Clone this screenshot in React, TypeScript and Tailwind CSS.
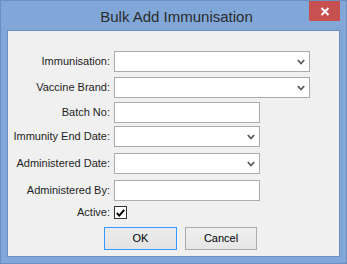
import React from "react";

const Chevron = () => (
  <svg width="8" height="6" viewBox="0 0 8 6" className="absolute right-[4px] top-[7px]">
    <path d="M0.8 1 L4 4.5 L7.2 1" stroke="#5a5a5a" strokeWidth="1.8" fill="none" />
  </svg>
);

function Row({
  label,
  mt,
  width,
  select,
}: {
  label: string;
  mt: string;
  width: string;
  select?: boolean;
}) {
  return (
    <div className={`flex items-center ${mt}`}>
      <div className="w-[103px] text-right pr-[1px] text-[11px] text-[#1e1e1e] leading-none">{label}</div>
      <div className={`relative ml-[3px] h-[21px] ${width} border border-[#acacac] bg-white`}>
        {select && <Chevron />}
      </div>
    </div>
  );
}

export default function App() {
  return (
    <div
      className="w-[347px] h-[264px] bg-[#80a7d8] border border-[#6d8fbf] flex flex-col"
      style={{ fontFamily: '"Liberation Sans", Arial, sans-serif' }}
    >
      <div className="relative h-[29px] flex items-center justify-center">
        <span className="text-[15px] text-[#2b2b2b] leading-none mt-[1px] ml-[6px]">Bulk Add Immunisation</span>
        <div className="absolute right-[6px] top-0 w-[31px] h-[20px] bg-[#c75050] flex items-center justify-center">
          <svg width="10" height="9" viewBox="0 0 10 9">
            <path d="M1.5 1 L8.5 8 M8.5 1 L1.5 8" stroke="white" strokeWidth="2" />
          </svg>
        </div>
      </div>
      <div className="mx-[6px] h-[227px] border border-[#6d8fbf] bg-[#f0f0f0] flex flex-col">
        <Row label="Immunisation:" mt="mt-[20px]" width="w-[196px]" select />
        <Row label="Vaccine Brand:" mt="mt-[5px]" width="w-[196px]" select />
        <Row label="Batch No:" mt="mt-[4px]" width="w-[146px]" />
        <Row label="Immunity End Date:" mt="mt-[3px]" width="w-[146px]" select />
        <Row label="Administered Date:" mt="mt-[6px]" width="w-[146px]" select />
        <Row label="Administered By:" mt="mt-[6px]" width="w-[146px]" />
        <div className="flex items-center mt-[5px]">
          <div className="w-[103px] text-right pr-[1px] text-[11px] text-[#1e1e1e] leading-none">Active:</div>
          <div className="ml-[3px] w-[13px] h-[13px] border border-[#333333] bg-white flex items-center justify-center">
            <svg width="9" height="8" viewBox="0 0 9 8">
              <path d="M0.8 4 L3.3 6.6 L8.2 0.8" stroke="black" strokeWidth="1.9" fill="none" />
            </svg>
          </div>
        </div>
        <div className="flex mt-[8px] ml-[96px] gap-[8px]">
          <div className="w-[73px] h-[23px] border border-[#3399ff] bg-gradient-to-b from-[#ececec] to-[#e3e3e3] flex items-center justify-center text-[11px] text-black">
            OK
          </div>
          <div className="w-[72px] h-[23px] border border-[#acacac] bg-gradient-to-b from-[#f0f0f0] to-[#e5e5e5] flex items-center justify-center text-[11px] text-black">
            Cancel
          </div>
        </div>
      </div>
    </div>
  );
}
